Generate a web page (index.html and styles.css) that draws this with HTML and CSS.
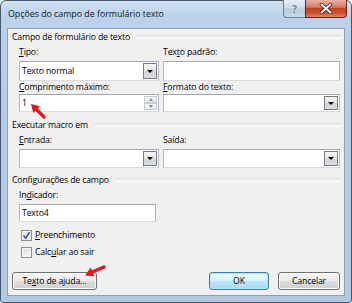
FILE: index.html
```html
<!DOCTYPE html>
<html>
<head>
<meta charset="utf-8">
<link rel="stylesheet" href="styles.css">
</head>
<body>
<div class="window">
  <div class="titlebar">
    <span class="title">Opções do campo de formulário texto</span>
    <div class="caption">
      <div class="cbtn help">?</div>
      <div class="cbtn close">
        <svg width="14" height="11" viewBox="0 0 14 11"><path d="M2.5 1.5 L11.5 9.5 M11.5 1.5 L2.5 9.5" stroke="#4a1a12" stroke-width="3.6" stroke-linecap="round"/><path d="M2.5 1.5 L11.5 9.5 M11.5 1.5 L2.5 9.5" stroke="#fff" stroke-width="2" stroke-linecap="round"/></svg>
      </div>
    </div>
  </div>
  <div class="client">
    <div class="group-title first"><span>Campo de formulário de texto</span></div>
    <div class="grid g1">
      <div class="lbl"><u>T</u>ipo:</div>
      <div class="lbl">Tex<u>t</u>o padrão:</div>
      <div class="combo"><span class="val">Texto normal</span><span class="dd"><i></i></span></div>
      <div class="tbox"></div>
      <div class="lbl s"><u>C</u>omprimento máximo:</div>
      <div class="lbl s"><u>F</u>ormato do texto:</div>
      <div class="tbox spinbox"><span class="val">1</span><span class="spin"><span class="sb up"><i></i></span><span class="sb dn"><i></i></span></span></div>
      <div class="combo"><span class="val"></span><span class="dd"><i></i></span></div>
    </div>
    <div class="group-title"><span>Executar macro em</span></div>
    <div class="grid g2">
      <div class="lbl"><u>E</u>ntrada:</div>
      <div class="lbl">Saída:</div>
      <div class="combo"><span class="val"></span><span class="dd"><i></i></span></div>
      <div class="combo"><span class="val"></span><span class="dd"><i></i></span></div>
    </div>
    <div class="group-title g3t"><span>Configurações de campo</span></div>
    <div class="single">
      <div class="lbl">In<u>d</u>icador:</div>
      <div class="tbox ind"><span class="val">Texto4</span></div>
    </div>
    <div class="check first-check">
      <span class="cb checked"><svg width="9" height="9" viewBox="0 0 9 9"><path d="M1.5 4.5 L3.6 7.2 L7.6 1.2" fill="none" stroke="#3f5893" stroke-width="1.6"/></svg></span>
      <span><u>P</u>reenchimento</span>
    </div>
    <div class="check">
      <span class="cb"></span>
      <span>Calc<u>u</u>lar ao sair</span>
    </div>
    <div class="buttons">
      <div class="btn help-btn">Te<u>x</u>to de ajuda...</div>
      <div class="spacer"></div>
      <div class="btn ok">OK</div>
      <div class="btn cancel">Cancelar</div>
    </div>
  </div>
</div>
<svg class="arrows" width="352" height="303" viewBox="0 0 352 303">
  <line x1="36" y1="109" x2="44" y2="117" stroke="#e8141b" stroke-width="3.2" stroke-linecap="round"/>
  <polygon points="31,104 40,106.3 33.3,113" fill="#e8141b"/>
  <line x1="91" y1="272.5" x2="104" y2="267" stroke="#e8141b" stroke-width="3.2" stroke-linecap="round"/>
  <polygon points="85,275.5 94.3,276.2 90.7,267.5" fill="#e8141b"/>
</svg>
</body>
</html>
```
FILE: styles.css
```css
* { box-sizing: border-box; }
html, body { margin: 0; padding: 0; }
body {
  width: 352px;
  height: 303px;
  overflow: hidden;
  position: relative;
  background: #ffffff;
  font-family: "Open Sans", "Noto Sans", sans-serif;
  font-size: 8.7px;
  letter-spacing: -0.15px;
  color: #000;
}
u { text-decoration: underline; text-underline-offset: 1px; }

.window {
  width: 352px;
  height: 303px;
  border: 1px solid #46576b;
  border-radius: 6px 6px 3px 3px;
  background: linear-gradient(#d3e2f2, #bcd2ea 14px, #b6cce5 40%, #b3c9e2);
  padding: 0 6px 6px 6px;
  display: flex;
  flex-direction: column;
}
.titlebar {
  height: 27px;
  display: flex;
  align-items: flex-start;
}
.title {
  margin-top: 6px;
  padding-left: 1px;
  line-height: 14px;
  font-size: 8.8px;
  letter-spacing: 0;
  color: #111a24;
}
.caption {
  margin-left: auto;
  margin-right: -2px;
  margin-top: -1px;
  display: flex;
}
.cbtn {
  height: 18px;
  display: flex;
  align-items: center;
  justify-content: center;
}
.help {
  width: 22px;
  border: 1px solid #6b7e95;
  border-top: none;
  border-right: none;
  border-radius: 0 0 0 4px;
  background: linear-gradient(#e6edf5, #cfdbe8 48%, #b9cadc 52%, #c9d7e6);
  color: #6d7c8e;
  font-weight: bold;
  font-size: 10px;
  text-shadow: 0 0 2px #fff;
}
.close {
  width: 42px;
  border: 1px solid #5c2a22;
  border-top: none;
  border-radius: 0 0 4px 0;
  background: linear-gradient(#eab0a3, #d97a66 42%, #c4431f 50%, #cc5230 78%, #e2866a);
}

.client {
  flex: 1;
  background: #f0f0f0;
  border: 1px solid #8a9fb8;
  display: flex;
  flex-direction: column;
}
.group-title {
  display: flex;
  align-items: center;
  height: 14px;
  line-height: 14px;
  padding-left: 4px;
  padding-right: 3px;
  margin-top: 6px;
}
.group-title.first { margin-top: 1px; }
.group-title.g3t { margin-top: 5px; }
.group-title::after {
  content: "";
  flex: 1;
  margin-left: 6px;
  height: 2px;
  border-top: 1px solid #dcdfe3;
  border-bottom: 1px solid #fbfbfb;
}
.grid {
  display: grid;
  grid-template-columns: 140px 177px;
  column-gap: 4px;
  padding: 0 3px 0 11px;
}
.g1 { grid-template-rows: 17px 20px 13px 18px; }
.g2 { grid-template-rows: 17px 19px; }
.lbl {
  line-height: 17px;
  height: 17px;
  white-space: nowrap;
}
.lbl.s { line-height: 13px; height: 13px; }

.combo, .tbox {
  background: #fff;
  border: 1px solid #b4b8bf;
  border-top-color: #a3a8b0;
  border-bottom-color: #d9dde3;
  display: flex;
  align-items: stretch;
}
.val {
  flex: 1;
  padding-left: 2px;
  display: flex;
  align-items: center;
}
.dd {
  width: 14px;
  margin: 1px;
  border: 1px solid #767c84;
  background: linear-gradient(#f6f6f6, #e6e6e6 50%, #d4d4d4 51%, #dcdcdc);
  display: flex;
  align-items: center;
  justify-content: center;
}
.dd i {
  width: 0; height: 0;
  border-left: 3px solid transparent;
  border-right: 3px solid transparent;
  border-top: 3px solid #000;
}
.spin {
  width: 13px;
  margin: 1px 1px 1px 0;
  display: flex;
  flex-direction: column;
  gap: 0;
}
.sb {
  flex: 1;
  border: 1px solid #c5ccd6;
  background: linear-gradient(#f7f9fb, #e4e9ef);
  display: flex;
  align-items: center;
  justify-content: center;
}
.sb i {
  width: 0; height: 0;
  border-left: 2.5px solid transparent;
  border-right: 2.5px solid transparent;
}
.sb.up i { border-bottom: 3px solid #7f8fa3; }
.sb.dn i { border-top: 3px solid #7f8fa3; }

.single { padding-left: 11px; }
.tbox.ind { width: 137px; height: 18px; }

.check {
  display: flex;
  align-items: center;
  height: 14px;
  margin-top: 3px;
  padding-left: 13px;
  gap: 2px;
}
.check.first-check { margin-top: 6px; }
.cb {
  width: 11px;
  height: 11px;
  border: 1px solid #8e8f8f;
  background: linear-gradient(135deg, #dcdcdc, #fbfbfb);
  box-shadow: inset 0 0 0 1px #f4f4f4;
  display: flex;
  align-items: center;
  justify-content: center;
  margin-right: 1px;
}

.buttons {
  margin-top: auto;
  margin-bottom: 5px;
  display: flex;
  gap: 9px;
  padding: 0 4px 0 4px;
}
.spacer { flex: 1; }
.btn {
  height: 18px;
  border: 1px solid #707070;
  border-radius: 3px;
  background: linear-gradient(#f4f4f4, #ebebeb 48%, #dddddd 52%, #cfcfcf);
  box-shadow: inset 0 0 0 1px #fbfbfb;
  display: flex;
  align-items: center;
  justify-content: center;
  white-space: nowrap;
}
.help-btn { width: 85px; }
.ok {
  width: 60px;
  border-color: #3c7fb1;
  background: linear-gradient(#eaf6fd, #d9f0fc 48%, #bee6fd 52%, #a7d9f5);
  box-shadow: inset 0 0 0 1px #b8e1f7;
}
.cancel { width: 62px; }

.arrows {
  position: absolute;
  left: 0;
  top: 0;
  pointer-events: none;
}
```
